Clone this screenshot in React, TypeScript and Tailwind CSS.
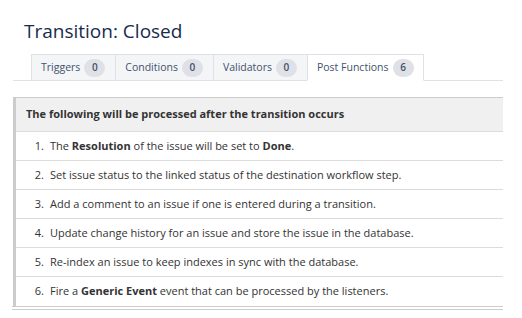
import React from "react";

const tabs = [
  { label: "Triggers", count: 0 },
  { label: "Conditions", count: 0 },
  { label: "Validators", count: 0 },
  { label: "Post Functions", count: 6, active: true },
];

export default function App() {
  return (
    <div
      className="w-[522px] h-[318px] bg-white text-[#172b4d] overflow-hidden"
      style={{ fontFamily: '"Open Sans", "Noto Sans", sans-serif' }}
    >
      <h1 className="pl-[24px] pt-[18px] text-[19px] leading-[26px] text-[#172b4d]">
        Transition: Closed
      </h1>

      {/* tabs */}
      <div className="mt-[10px] ml-[13px] w-[490px] flex border-b border-[#dfe1e6] pl-[18px]">
        {tabs.map((t) => (
          <div
            key={t.label}
            className={
              t.active
                ? "h-[27px] -mb-px flex items-center gap-[4px] pl-[9px] pr-[9px] bg-white border border-[#dfe1e6] border-b-white text-[10.5px] text-[#42526e]"
                : "h-[26px] flex items-center gap-[4px] pl-[9px] pr-[10px] bg-[#f4f5f7] border border-r-0 border-[#dfe1e6] border-b-0 text-[10.5px] text-[#42526e]"
            }
          >
            <span>{t.label}</span>
            <span className="h-[18px] min-w-[21px] px-[6px] rounded-full bg-[#dfe1e6] flex items-center justify-center text-[10px] font-semibold text-[#42526e]">
              {t.count}
            </span>
          </div>
        ))}
      </div>

      {/* table */}
      <div className="mt-[16px] ml-[13px] w-[490px] border-l-[3px] border-[#ccc] border-t border-t-[#ccc]">
        <div className="h-[34px] bg-[#f0f0f0] border-b border-[#dcdcdc] flex items-center pl-[10px] text-[11px] font-bold text-[#333]">
          The following will be processed after the transition occurs
        </div>
        <ol className="text-[11px] text-[#333]">
          {[
            <>The <b>Resolution</b> of the issue will be set to <b>Done</b>.</>,
            <>Set issue status to the linked status of the destination workflow step.</>,
            <>Add a comment to an issue if one is entered during a transition.</>,
            <>Update change history for an issue and store the issue in the database.</>,
            <>Re-index an issue to keep indexes in sync with the database.</>,
            <>Fire a <b>Generic Event</b> event that can be processed by the listeners.</>,
          ].map((c, i) => (
            <li
              key={i}
              className="h-[29px] flex items-center border-b border-[#dcdcdc] last:border-b-0"
            >
              <span className="w-[34px] text-right pr-[6px] shrink-0">{i + 1}.</span>
              <span>{c}</span>
            </li>
          ))}
        </ol>
      </div>
      <div className="ml-[12px] w-[491px] h-[4px] border-t border-b border-[#ccc]" />
    </div>
  );
}
